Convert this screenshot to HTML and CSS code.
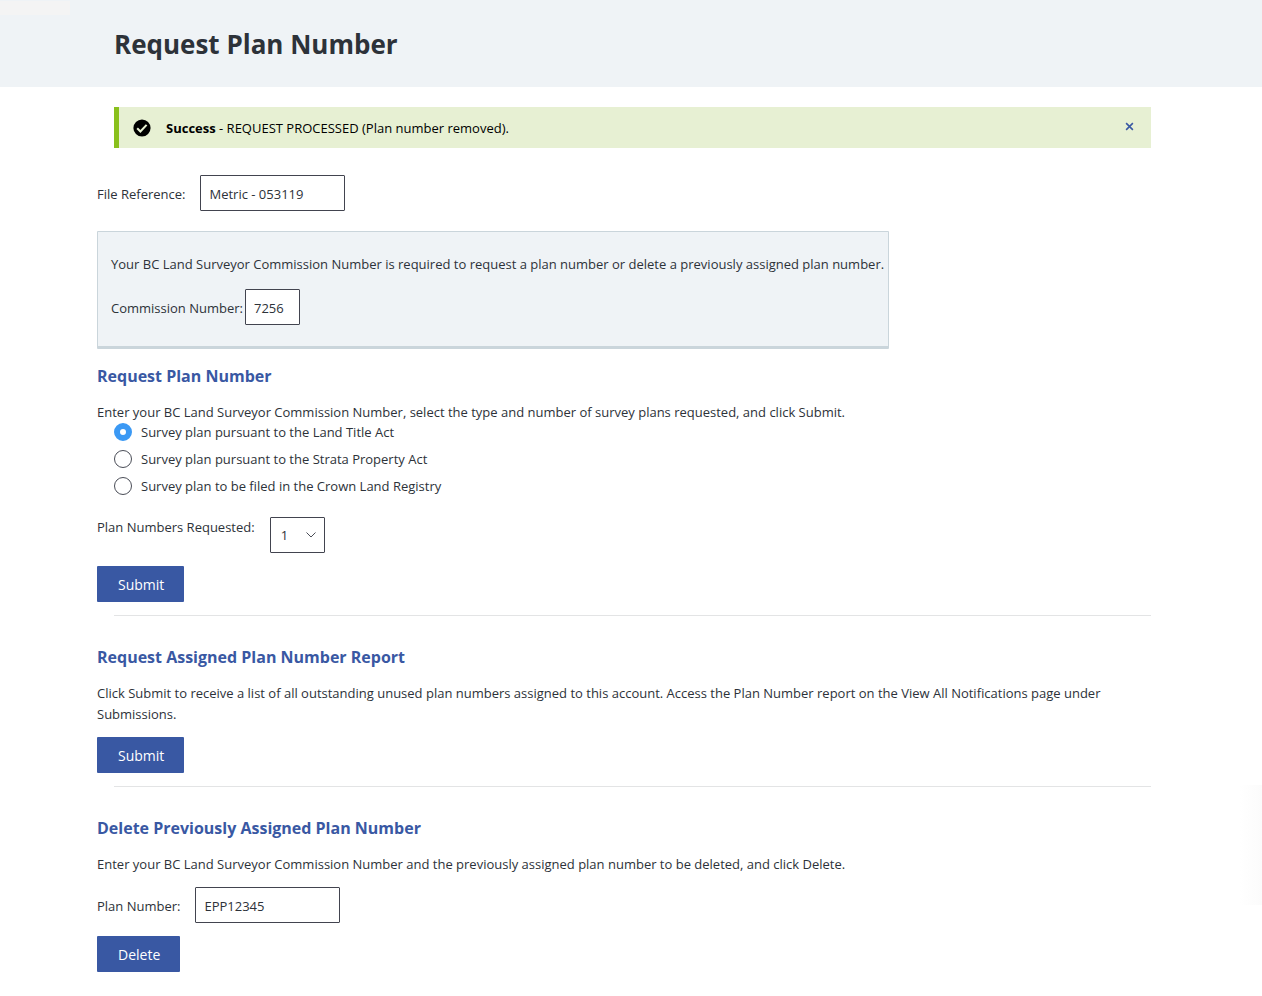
FILE: index.html
```html
<!DOCTYPE html>
<html lang="en">
<head>
    <meta charset="UTF-8">
    <meta name="viewport" content="width=device-width, initial-scale=1.0">
    <title>Request Plan Number</title>
    <link rel="stylesheet" href="styles.css">
</head>
<body>
    <header class="page-header">
        <h1>Request Plan Number</h1>
    </header>

    <main class="content">
        <div class="alert" role="status">
            <svg class="alert-icon" viewBox="0 0 18 18" aria-hidden="true">
                <circle cx="9" cy="9" r="8.6" fill="#000"/>
                <path d="M4.2 9.3 7.4 12.4 13.6 5.9" fill="none" stroke="#e7f0d3" stroke-width="2.1"/>
            </svg>
            <p class="alert-text"><strong>Success</strong> - REQUEST PROCESSED (Plan number removed).</p>
            <button type="button" class="alert-close" aria-label="Close">
                <svg viewBox="0 0 8 8" aria-hidden="true"><path d="M1 1 7 7M7 1 1 7" fill="none" stroke="#3958a3" stroke-width="1.4"/></svg>
            </button>
        </div>

        <div class="field">
            <label for="file-ref">File Reference:</label>
            <input type="text" id="file-ref" class="text-input" value="Metric - 053119">
        </div>

        <div class="panel">
            <p>Your BC Land Surveyor Commission Number is required to request a plan number or delete a previously assigned plan number.</p>
            <div class="panel-field">
                <label for="commission">Commission Number:</label>
                <input type="text" id="commission" class="text-input short" value="7256">
            </div>
        </div>

        <!-- Request Plan Number -->
        <form class="section first">
            <h2>Request Plan Number</h2>
            <p>Enter your BC Land Surveyor Commission Number, select the type and number of survey plans requested, and click Submit.</p>
            <div class="radio-group">
                <label class="radio"><input type="radio" name="plan-type" checked> Survey plan pursuant to the Land Title Act</label>
                <label class="radio"><input type="radio" name="plan-type"> Survey plan pursuant to the Strata Property Act</label>
                <label class="radio"><input type="radio" name="plan-type"> Survey plan to be filed in the Crown Land Registry</label>
            </div>
            <div class="field top">
                <label for="plan-count">Plan Numbers Requested:</label>
                <div class="select-wrap">
                    <select id="plan-count">
                        <option>1</option>
                        <option>2</option>
                        <option>3</option>
                    </select>
                    <svg class="chevron" viewBox="0 0 10 6" aria-hidden="true"><path d="M.5 .5 5 5 9.5 .5" fill="none" stroke="#4a4d57"/></svg>
                </div>
            </div>
            <button type="button" class="btn">Submit</button>
        </form>

        <!-- Assigned Plan Number Report -->
        <form class="section">
            <h2>Request Assigned Plan Number Report</h2>
            <p>Click Submit to receive a list of all outstanding unused plan numbers assigned to this account. Access the Plan Number report on the View All Notifications page under Submissions.</p>
            <button type="button" class="btn">Submit</button>
        </form>

        <!-- Delete Plan Number -->
        <form class="section">
            <h2>Delete Previously Assigned Plan Number</h2>
            <p>Enter your BC Land Surveyor Commission Number and the previously assigned plan number to be deleted, and click Delete.</p>
            <div class="field">
                <label for="plan-number">Plan Number:</label>
                <input type="text" id="plan-number" class="text-input" value="EPP12345">
            </div>
            <button type="button" class="btn">Delete</button>
        </form>
    </main>
    <div class="edge-shade"></div>
</body>
</html>
```
FILE: styles.css
```css
* { box-sizing: border-box; margin: 0; padding: 0; }
body { font-family: "Segoe UI", "Open Sans", "Noto Sans", sans-serif; font-size: 13px; line-height: 21px; color: #2d3239; background: #fff; }
input, select, button { font: inherit; color: inherit; }

.page-header { position: relative; padding: 24px 114px 23px; background: #eff3f6; }
.page-header::before { content: ""; position: absolute; left: 0; top: 1px; width: 70px; height: 14px; background: #f4f4f4; }
h1 { font-size: 26px; line-height: 40px; font-weight: 700; color: #2d3239; }

.content { padding: 20px 94px 24px 97px; }

.alert { display: flex; align-items: center; margin: 0 17px 27px; padding: 10px 17px 10px 14px; background: #e7f0d3; border-left: 5px solid #89c01c; color: #000; }
.alert-icon { width: 18px; height: 18px; margin-right: 15px; }
.alert-text { flex: 1; padding-top: 1px; line-height: 20px; }
.alert-close { display: flex; padding: 4px 0 6px; background: none; border: none; cursor: pointer; }
.alert-close svg { width: 9px; height: 9px; }

.field { display: flex; align-items: center; gap: 15px; }
.field label, .panel-field label { padding-top: 2px; }
.field.top { align-items: flex-start; }
.field.top label { padding-top: 0; }
.text-input { width: 145px; height: 36px; padding: 1px 8px 0; background: #fff; border: 1px solid #42444f; border-radius: 1px; }
.text-input.short { width: 55px; }

.panel { width: fit-content; margin-top: 20px; padding: 22px 4px 21px 13px; background: #eff3f6; border: 1px solid #cad5db; border-bottom-width: 3px; border-radius: 1px; }
.panel-field { display: flex; align-items: center; gap: 2px; margin-top: 14px; }

.section { padding-top: 31px; }
.section.first { padding-top: 17px; }
.section + .section::before { content: ""; display: block; height: 1px; margin: -18px 17px 31px; background: #e3e4e5; }
.section h2 { margin-bottom: 15px; font-size: 16px; line-height: 21px; font-weight: 700; color: #3958a3; }
.section > .field { margin-top: 12px; }
.section > .field.top { margin-top: 20px; }

.radio-group { display: flex; flex-direction: column; gap: 6px; margin-top: -1px; padding-left: 17px; }
.radio { display: flex; align-items: center; gap: 9px; width: fit-content; }
.radio input { appearance: none; width: 18px; height: 18px; margin-bottom: 2px; background: #fff; border: 1px solid #4a4d57; border-radius: 50%; }
.radio input:checked { border: 6px solid #3b99f4; }

.select-wrap { position: relative; }
.select-wrap select { appearance: none; display: block; width: 55px; height: 36px; padding: 0 10px; background: #fff; border: 1px solid #42444f; border-radius: 1px; }
.chevron { position: absolute; right: 9px; top: 15px; width: 10px; height: 6px; pointer-events: none; }

.btn { display: block; height: 36px; margin-top: 13px; padding: 0 20px 0 21px; background: #3958a3; border: none; border-radius: 1px; color: #fff; font-size: 14px; cursor: pointer; }
p + .btn { margin-top: 12px; }

.edge-shade { position: absolute; right: 0; top: 785px; width: 22px; height: 120px; background: linear-gradient(to right, #fff, #fbfbfb); }
```
